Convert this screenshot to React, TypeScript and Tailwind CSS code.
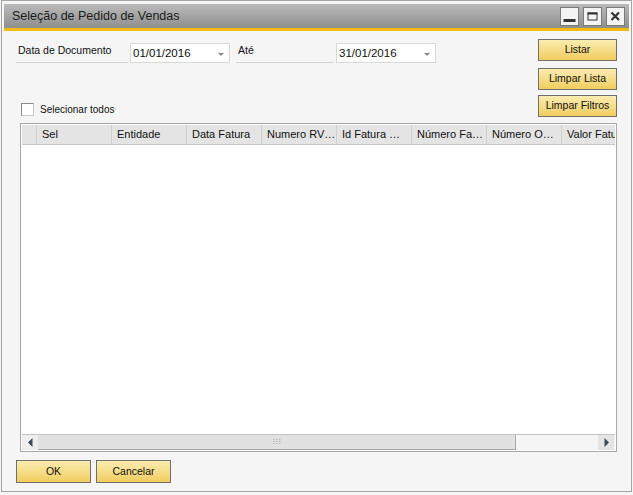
import React from "react";

const F = { fontFamily: '"Liberation Sans", Arial, sans-serif' };

function YButton({ label, className = "" }: { label: string; className?: string }) {
  return (
    <div
      className={`flex items-center justify-center border border-[#6f6f6f] bg-gradient-to-b from-[#fbecb0] to-[#f1cd5c] text-[10.5px] text-[#111] ${className}`}
    >
      {label}
    </div>
  );
}

function Caret() {
  return (
    <svg width="6" height="4" viewBox="0 0 6 4" className="absolute right-[5px] top-[9px]">
      <path d="M0 0 H6 L3 3 Z" fill="#8a8a8a" />
    </svg>
  );
}

function DateInput({ value }: { value: string }) {
  return (
    <div className="relative h-[20px] w-[100px] border border-[#d9d9d9] bg-white pl-[2px] text-[11.5px] leading-[19px] text-[#111]">
      {value}
      <Caret />
    </div>
  );
}

function Label({ text, w }: { text: string; w: string }) {
  return (
    <div className={`h-[20px] ${w} border-b border-[#d6d6d6] pl-[2px] pt-[1px] text-[10.5px] leading-[13px] text-[#111]`}>
      {text}
    </div>
  );
}

const cols = ["Sel", "Entidade", "Data Fatura", "Numero RV…", "Id Fatura …", "Número Fa…", "Número O…", "Valor Fatu"];

export default function App() {
  return (
    <div className="h-[495px] w-[633px] bg-[#f5f5f5]" style={F}>
      <div className="ml-[1px] flex h-[492px] w-[631px] flex-col border border-[#a5a5a5] bg-[#f5f5f5] px-[2px] pt-[3px]">
        {/* title bar */}
        <div className="flex h-[24px] items-center justify-between bg-gradient-to-b from-[#bababa] to-[#8f8f8f] pl-[8px] pr-[4px]">
          <span className="text-[12.5px] text-[#1c1c1c]">Seleção de Pedido de Vendas</span>
          <div className="flex gap-[4px]">
            <div className="flex h-[19px] w-[19px] items-center justify-center border border-[#7a7a7a] bg-[#f3f3f3]">
              <svg width="13" height="13" viewBox="0 0 13 13">
                <rect x="0.5" y="9" width="12" height="3" fill="#333" />
              </svg>
            </div>
            <div className="flex h-[19px] w-[19px] items-center justify-center border border-[#7a7a7a] bg-[#f3f3f3]">
              <svg width="13" height="13" viewBox="0 0 13 13">
                <rect x="2" y="3" width="9" height="7" fill="none" stroke="#333" strokeWidth="1" />
                <rect x="1.5" y="2.5" width="10" height="2" fill="#333" />
              </svg>
            </div>
            <div className="flex h-[19px] w-[19px] items-center justify-center border border-[#7a7a7a] bg-[#f3f3f3]">
              <svg width="13" height="13" viewBox="0 0 13 13">
                <path d="M2.5 2.5 L10 10 M10 2.5 L2.5 10" stroke="#333" strokeWidth="2.2" />
              </svg>
            </div>
          </div>
        </div>
        <div className="h-[3px] bg-[#f6bc12]" />

        {/* top area */}
        <div className="flex h-[92px] justify-between">
          <div className="flex flex-col pl-[12px] pt-[12px]">
            <div className="flex items-start">
              <Label text="Data de Documento" w="w-[112px]" />
              <div className="ml-[2px]">
                <DateInput value="01/01/2016" />
              </div>
              <div className="ml-[6px]">
                <Label text="Até" w="w-[98px]" />
              </div>
              <div className="ml-[2px]">
                <DateInput value="31/01/2016" />
              </div>
            </div>
            <div className="ml-[5px] mt-[39px] flex items-center">
              <div className="h-[13px] w-[13px] border border-[#8c8c8c] border-b-[#c8c8c8] border-r-[#c8c8c8] bg-white" />
              <span className="ml-[6px] text-[10px] text-[#111]">Selecionar todos</span>
            </div>
          </div>
          <div className="flex flex-col pr-[12px] pt-[8px]">
            <YButton label="Listar" className="h-[22px] w-[79px]" />
            <YButton label="Limpar Lista" className="mt-[7px] h-[22px] w-[79px]" />
            <YButton label="Limpar Filtros" className="mt-[5px] h-[22px] w-[79px]" />
          </div>
        </div>

        {/* grid */}
        <div className="ml-[16px] flex h-[329px] w-[597px] flex-col border border-[#a8a8a8] bg-white p-[1px]">
          <div className="flex h-[20px] shrink-0 overflow-hidden border-b border-[#c6c6c6] bg-[#e4e4e4] text-[11px] text-[#111]">
            <div className="w-[14px] shrink-0" />
            {cols.map((c) => (
              <div
                key={c}
                className="flex w-[75px] shrink-0 items-center overflow-hidden whitespace-nowrap border-l border-[#d0d0d0] pl-[5px]"
              >
                {c}
              </div>
            ))}
          </div>
          <div className="flex-1 bg-white" />
          <div className="flex h-[16px] shrink-0 border-t border-[#c4c4c4] bg-[#f5f5f5]">
            <div className="flex w-[16px] items-center justify-center bg-[#eeeeee]">
              <svg width="5" height="9" viewBox="0 0 5 9">
                <path d="M4.5 0 V9 L0 4.5 Z" fill="#3d4955" />
              </svg>
            </div>
            <div className="relative flex w-[478px] items-center justify-center border-b border-r border-[#a9a9a9] bg-[#e1e1e1]">
              <svg width="8" height="6" viewBox="0 0 8 6">
                {[0, 3, 6].map((x) =>
                  [0, 2, 4].map((y) => <rect key={`${x}-${y}`} x={x} y={y} width="1.5" height="1" fill="#b8b8b8" />)
                )}
              </svg>
            </div>
            <div className="flex-1" />
            <div className="flex w-[16px] items-center justify-center bg-[#e4e4e4]">
              <svg width="5" height="9" viewBox="0 0 5 9">
                <path d="M0.5 0 V9 L5 4.5 Z" fill="#3d4955" />
              </svg>
            </div>
            <div className="w-[1px]" />
          </div>
        </div>

        {/* bottom buttons */}
        <div className="ml-[12px] mt-[8px] flex gap-[5px]">
          <YButton label="OK" className="h-[23px] w-[75px]" />
          <YButton label="Cancelar" className="h-[23px] w-[75px]" />
        </div>
      </div>
    </div>
  );
}
